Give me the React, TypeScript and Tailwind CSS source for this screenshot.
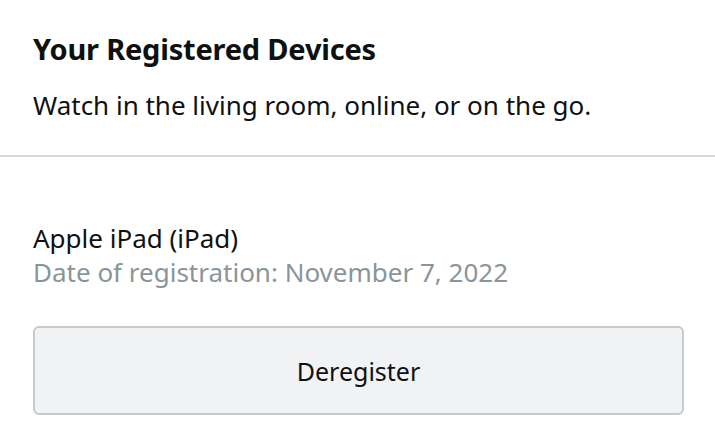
export default function App() {
  return (
    <div className="w-[715px] h-[446px] bg-white overflow-hidden" style={{ fontFamily: '"Noto Sans", "Open Sans", sans-serif' }}>
      <div className="px-[33px] pt-[31px] pb-[32px]">
        <h1 className="text-[29px] leading-[36px] font-bold tracking-[-0.2px] text-[#0f1111]">Your Registered Devices</h1>
        <p className="mt-[20px] text-[26px] leading-[36px] text-[#0f1111]">Watch in the living room, online, or on the go.</p>
      </div>
      <div className="h-[2px] bg-[#d5d9d9]" />
      <div className="px-[33px] pt-[68px]">
        <div className="text-[26px] leading-[26px] text-[#0f1111]">Apple iPad (iPad)</div>
        <div className="mt-[8px] text-[26px] leading-[26px] text-[#8a9599]">Date of registration: November 7, 2022</div>
        <button className="mt-[41px] w-[651px] h-[89px] rounded-[6px] border-2 border-[#c6cacc] bg-[#f1f2f4] text-[25px] text-[#0f1111] pt-[2px]">
          Deregister
        </button>
      </div>
    </div>
  )
}
